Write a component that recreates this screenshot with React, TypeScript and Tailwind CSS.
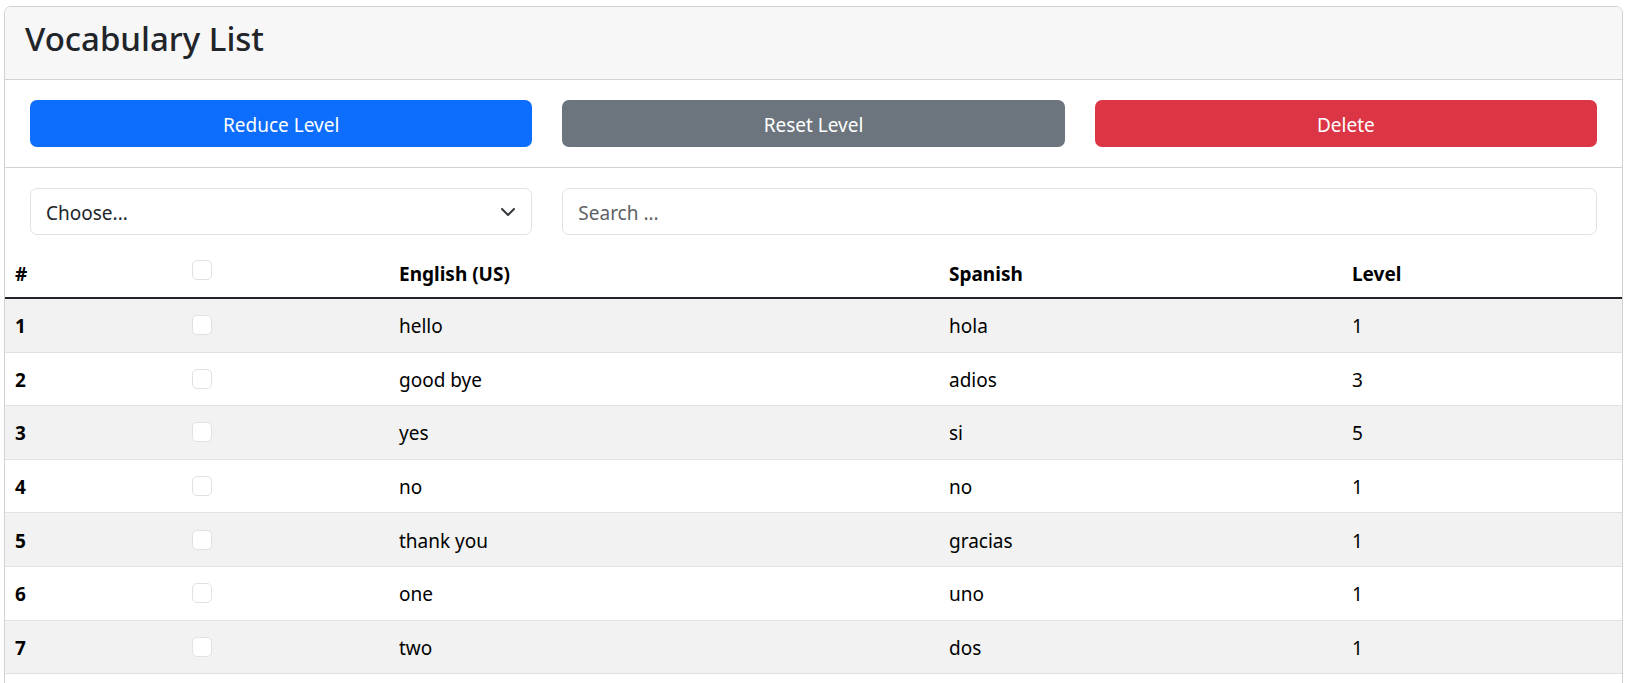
import React from "react";

const rows = [
  { id: 1, en: "hello", es: "hola", level: 1 },
  { id: 2, en: "good bye", es: "adios", level: 3 },
  { id: 3, en: "yes", es: "si", level: 5 },
  { id: 4, en: "no", es: "no", level: 1 },
  { id: 5, en: "thank you", es: "gracias", level: 1 },
  { id: 6, en: "one", es: "uno", level: 1 },
  { id: 7, en: "two", es: "dos", level: 1 },
];

function Check() {
  return <div className="w-[20px] h-[20px] rounded-[5px] border border-[#dee2e6] bg-white" />;
}

export default function App() {
  return (
    <div
      className="bg-white min-h-screen pt-[6px] pl-[4px]"
      style={{ fontFamily: '"Segoe UI", "Noto Sans", "Open Sans", sans-serif' }}
    >
      <div className="w-[1619px] border border-[#d2d2d2] rounded-[7px] bg-white overflow-hidden">
        <div className="bg-[#f7f7f7] px-[20px] pt-[11px] pb-[19px] border-b border-[#d2d2d2]">
          <h3 className="text-[33px] leading-[42px] font-medium text-[#212529]">Vocabulary List</h3>
        </div>
        <div className="px-[25px] pt-[20px] pb-[20px] border-b border-[#d2d2d2] grid grid-cols-3 gap-[30px]">
          <button className="h-[47px] pt-[2px] rounded-[7px] bg-[#0d6efd] text-white text-[19px] leading-[30px]">Reduce Level</button>
          <button className="h-[47px] pt-[2px] rounded-[7px] bg-[#6c757d] text-white text-[19px] leading-[30px]">Reset Level</button>
          <button className="h-[47px] pt-[2px] rounded-[7px] bg-[#dc3545] text-white text-[19px] leading-[30px]">Delete</button>
        </div>
        <div className="px-[25px] pt-[20px] grid grid-cols-3 gap-[30px]">
          <div className="h-[47px] rounded-[7px] border border-[#dee2e6] flex items-center justify-between pl-[15px] pr-[15px] text-[19px] text-[#212529]">
            <span className="pt-[3px]">Choose...</span>
            <svg width="16" height="16" viewBox="0 0 16 16" fill="none">
              <path d="M2 5l6 6 6-6" stroke="#343a40" strokeWidth="2" strokeLinecap="round" strokeLinejoin="round" />
            </svg>
          </div>
          <div className="col-span-2 h-[47px] rounded-[7px] border border-[#dee2e6] flex items-center pl-[15px] text-[19px] text-[#5d6165]">
            <span className="pt-[3px]">Search ...</span>
          </div>
        </div>
        <div className="text-[19px] leading-[30px] text-black pb-[60px]">
          <div className="grid grid-cols-[177px_207px_550px_403px_1fr] h-[64px] border-b-2 border-[#212529] font-bold">
            <div className="px-[10px] self-end pb-[8px]">#</div>
            <div className="px-[10px] self-end pb-[17px]"><Check /></div>
            <div className="px-[10px] self-end pb-[8px]">English (US)</div>
            <div className="px-[10px] self-end pb-[8px]">Spanish</div>
            <div className="px-[10px] self-end pb-[8px]">Level</div>
          </div>
          {rows.map((r, i) => (
            <div
              key={r.id}
              className={`grid grid-cols-[177px_207px_550px_403px_1fr] h-[53.6px] border-b border-[#dee2e6] items-center ${i % 2 === 0 ? "bg-[#f2f2f2]" : "bg-white"}`}
            >
              <div className="px-[10px] pt-[2px] font-bold">{r.id}</div>
              <div className="px-[10px]"><Check /></div>
              <div className="px-[10px] pt-[2px]">{r.en}</div>
              <div className="px-[10px] pt-[2px]">{r.es}</div>
              <div className="px-[10px] pt-[2px]">{r.level}</div>
            </div>
          ))}
        </div>
      </div>
    </div>
  );
}
